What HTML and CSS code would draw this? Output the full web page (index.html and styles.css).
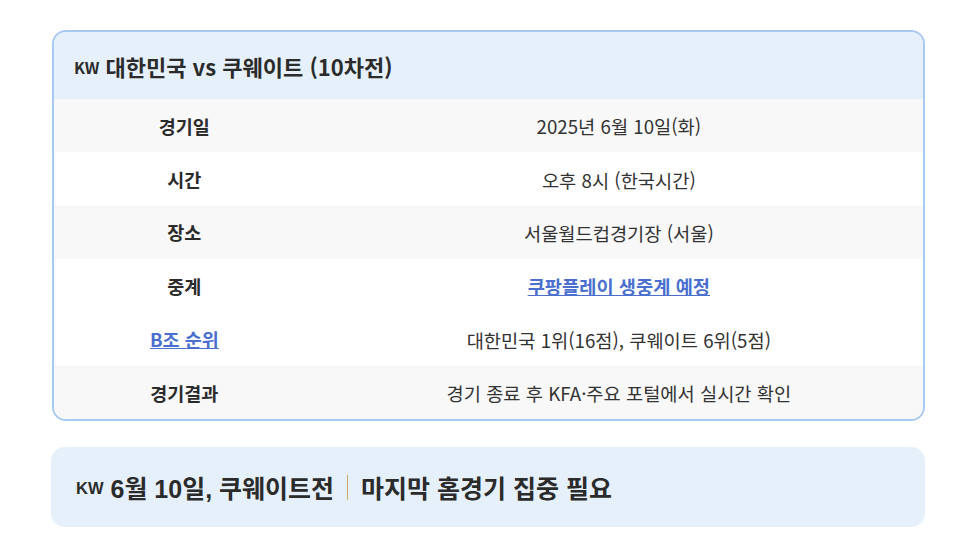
FILE: index.html
```html
<!DOCTYPE html>
<html lang="ko">
<head>
<meta charset="utf-8">
<title>대한민국 vs 쿠웨이트</title>
<link rel="stylesheet" href="styles.css">
</head>
<body>
<main class="wrap">
  <section class="card">
    <h2 class="card-head"><span class="flag">KW</span> 대한민국 vs 쿠웨이트 (10차전)</h2>
    <table class="info">
      <tbody>
        <tr class="shade"><th>경기일</th><td>2025년 6월 10일(화)</td></tr>
        <tr><th>시간</th><td>오후 8시 (한국시간)</td></tr>
        <tr class="shade"><th>장소</th><td>서울월드컵경기장 (서울)</td></tr>
        <tr><th>중계</th><td><a href="#" class="link">쿠팡플레이 생중계 예정</a></td></tr>
        <tr><th><a href="#" class="link">B조 순위</a></th><td>대한민국 1위(16점), 쿠웨이트 6위(5점)</td></tr>
        <tr class="shade"><th>경기결과</th><td>경기 종료 후 KFA·주요 포털에서 실시간 확인</td></tr>
      </tbody>
    </table>
  </section>
  <section class="banner">
    <h3 class="banner-title"><span class="flag2">KW</span> 6월 10일, 쿠웨이트전<span class="sep"></span>마지막 홈경기 집중 필요</h3>
  </section>
</main>
</body>
</html>
```
FILE: styles.css
```css
html, body {
  margin: 0;
  padding: 0;
  background: #ffffff;
}
body {
  font-family: "Noto Sans CJK KR", "Noto Sans", sans-serif;
  color: #333333;
}
.wrap {
  width: 873px;
  padding: 30px 0 0 52px;
  display: flex;
  flex-direction: column;
  gap: 26px;
}
.card {
  border: 2px solid #a9c9f3;
  border-radius: 14px;
  overflow: hidden;
  background: #ffffff;
}
.card-head {
  margin: 0;
  height: 67px;
  box-sizing: border-box;
  padding: 0 0 0 20px;
  display: flex;
  align-items: center;
  background: #e6f0fb;
  font-size: 22px;
  font-weight: 700;
  color: #2b2b2b;
  gap: 6px;
}
.flag {
  font-size: 16px;
  font-weight: 700;
  padding-top: 2px;
}
.info {
  width: 100%;
  border-collapse: collapse;
  table-layout: fixed;
}
.info tr {
  height: 53.4px;
}
.info tr.shade {
  background: #f8f8f8;
}
.info th {
  width: 30%;
  font-weight: 700;
  font-size: 18.5px;
  color: #2b2b2b;
  text-align: center;
  padding: 0;
}
.info td {
  font-size: 18.7px;
  color: #333333;
  text-align: center;
  padding: 0;
}
.link {
  color: #4a6fcf;
  text-decoration: underline;
  font-weight: 700;
}
.banner {
  background: #e6f0fb;
  border-radius: 14px;
  height: 80px;
  display: flex;
  align-items: center;
  padding-left: 25px;
  margin-left: -1px;
}
.banner-title {
  margin: 0;
  font-family: "Liberation Sans", "Noto Sans CJK KR", sans-serif;
  font-size: 25px;
  font-weight: 700;
  color: #2b2b2b;
  display: flex;
  align-items: center;
}
.flag2 {
  font-size: 16.5px;
  margin-right: 7px;
  padding-top: 3px;
}
.sep {
  display: inline-block;
  width: 1px;
  height: 25px;
  background: #d2a964;
  margin: 0 13px 0 13px;
}
```
